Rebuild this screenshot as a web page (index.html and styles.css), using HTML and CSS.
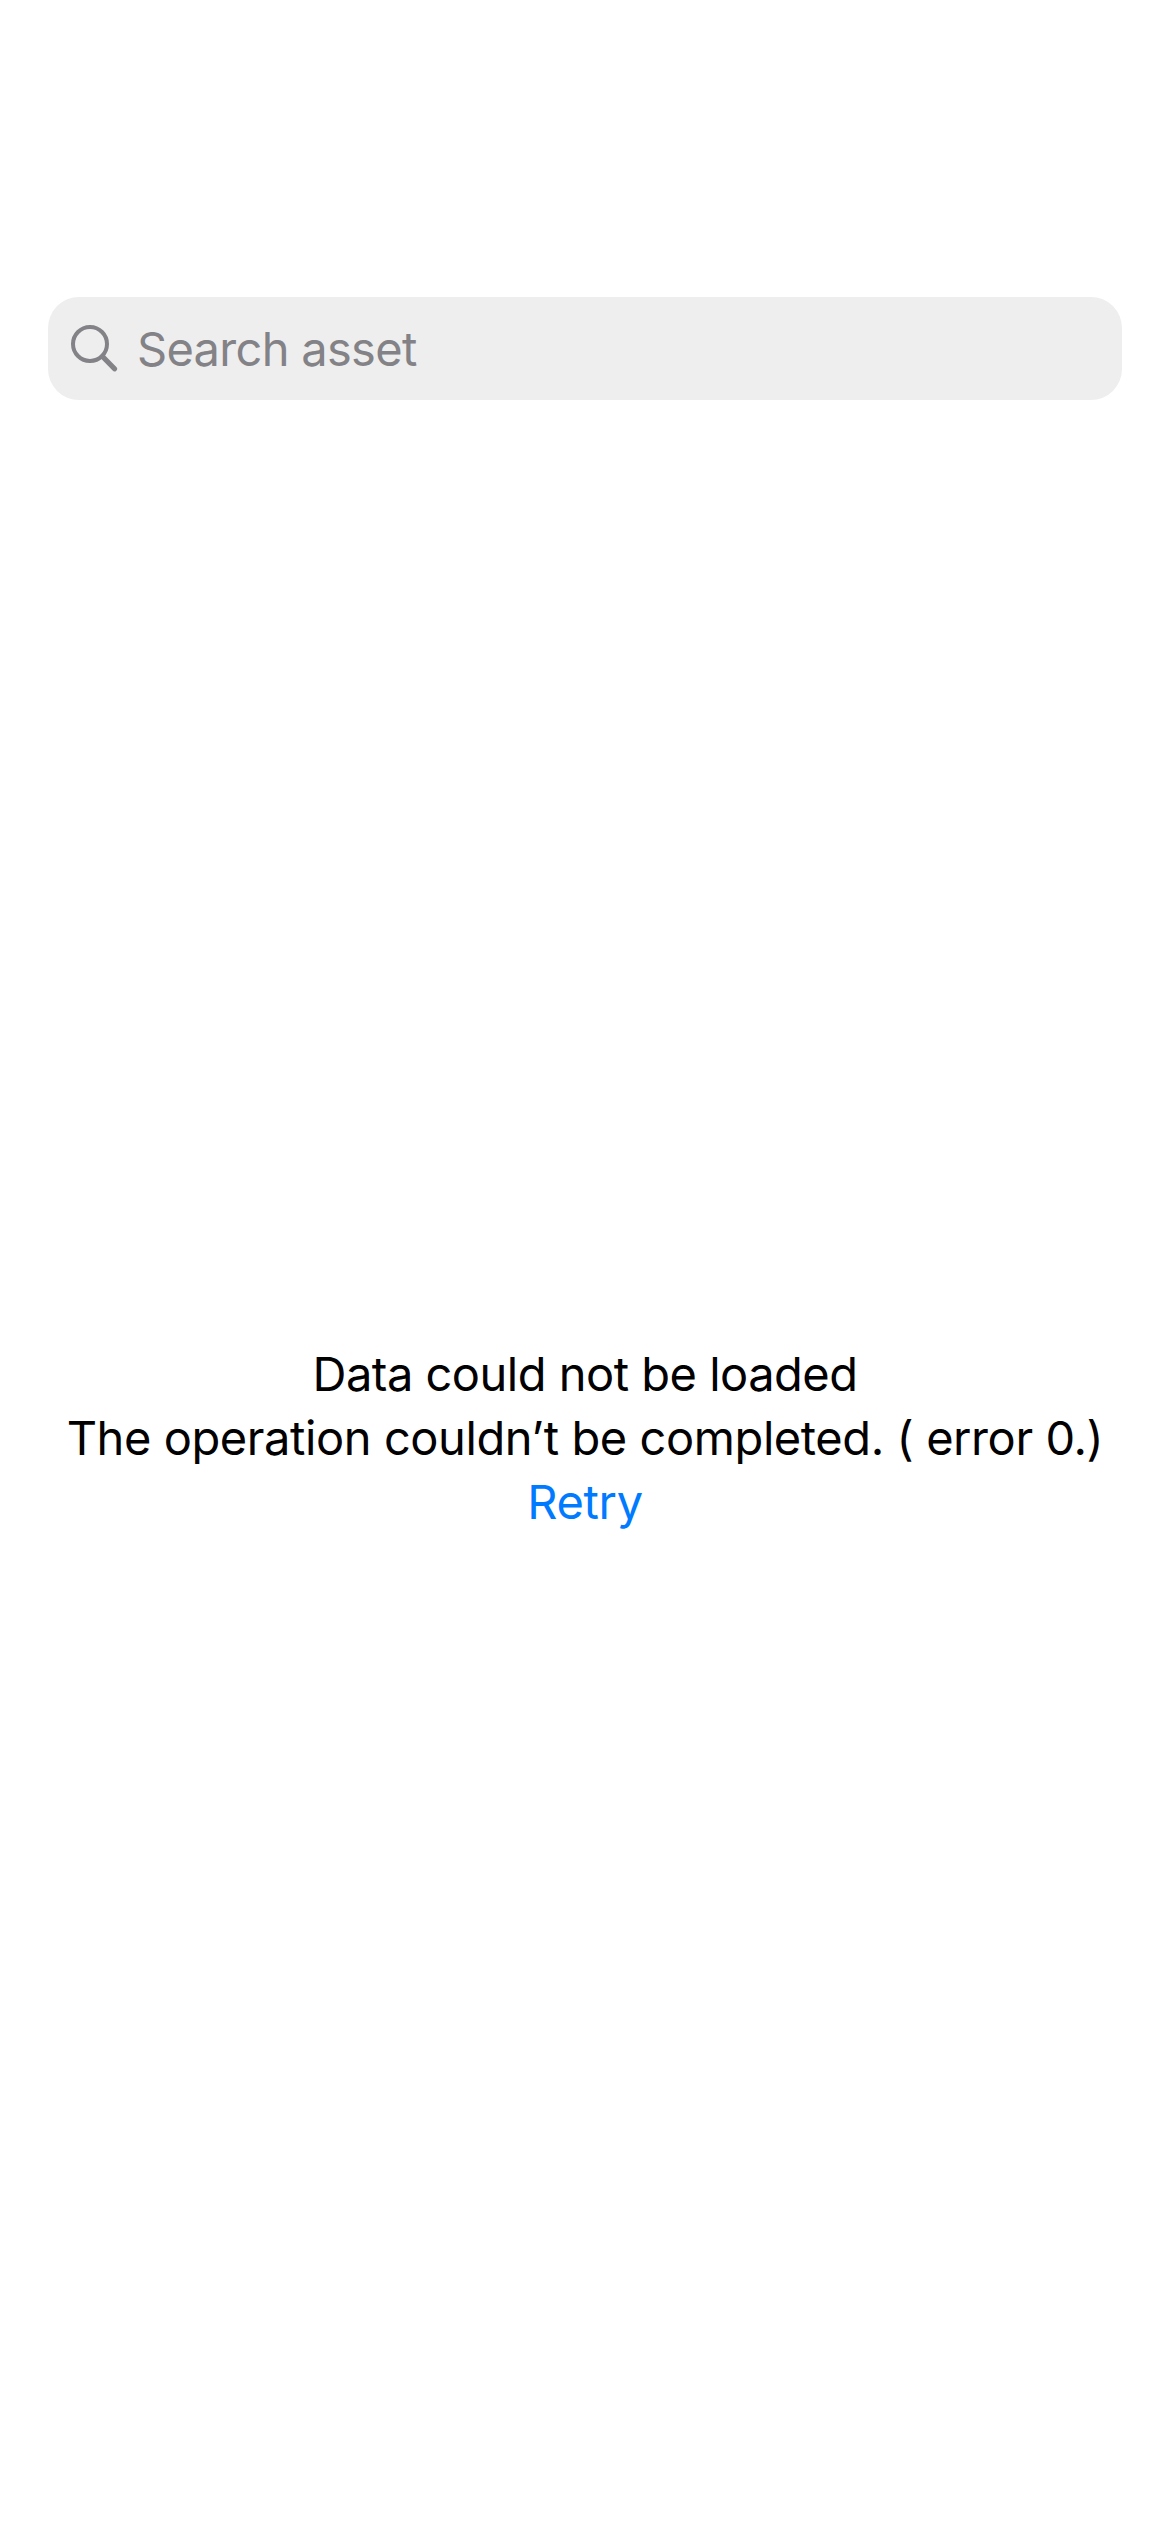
FILE: index.html
```html
<!DOCTYPE html>
<html lang="en">
<head>
<meta charset="utf-8">
<title>Assets</title>
<link rel="stylesheet" href="styles.css">
</head>
<body>
<main class="screen">
  <div class="search">
    <svg class="search-icon" viewBox="0 0 48 48" fill="none" stroke="currentColor" stroke-linecap="round"><circle cx="20" cy="19" r="17" stroke-width="4"/><path d="M32.5 31.5L44.5 43.8" stroke-width="5.2"/></svg>
    <span class="placeholder">Search asset</span>
  </div>
  <section class="message">
    <p class="line title">Data could not be loaded</p>
    <p class="line detail">The operation couldn’t be completed. ( error 0.)</p>
    <button class="line retry" type="button">Retry</button>
  </section>
</main>
</body>
</html>
```
FILE: styles.css
```css
body {
  margin: 0;
  background: #fff;
  color: #000;
  font-family: Inter, "Liberation Sans", sans-serif;
}

.screen {
  box-sizing: border-box;
  height: 2532px;
  padding: 297px 48px 0;
}

.search {
  display: flex;
  align-items: center;
  gap: 19px;
  box-sizing: border-box;
  height: 103px;
  padding-left: 22px;
  border-radius: 31px;
  background: #eee;
  color: #838287;
}

.search-icon {
  width: 48px;
  height: 48px;
}

.placeholder {
  padding-top: 1px;
  font-size: 47px;
  line-height: 64px;
  letter-spacing: -0.7px;
}

.message {
  display: flex;
  flex-direction: column;
  align-items: center;
  padding-top: 942px;
}

.line {
  margin: 0;
  padding: 0;
  border: 0;
  background: none;
  font: inherit;
  font-size: 47px;
  line-height: 64px;
  white-space: nowrap;
}

.title {
  letter-spacing: -0.5px;
}

.detail {
  letter-spacing: -0.42px;
}

.retry {
  color: #007aff;
  letter-spacing: -0.3px;
}
```
